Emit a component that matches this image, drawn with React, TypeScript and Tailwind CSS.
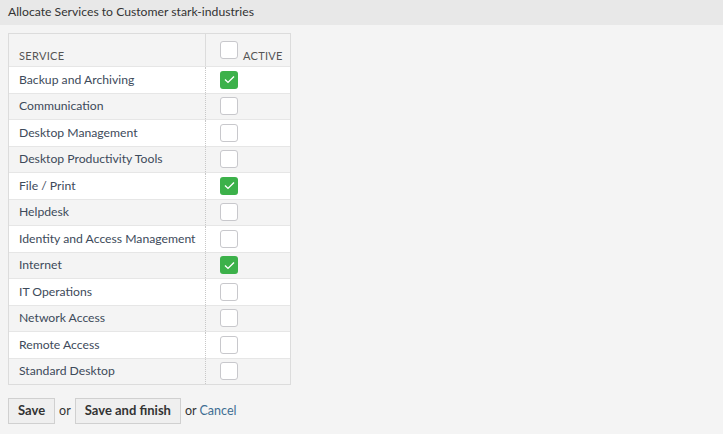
import React, { useState } from "react";

const services = [
    { name: "Backup and Archiving", active: true },
    { name: "Communication", active: false },
    { name: "Desktop Management", active: false },
    { name: "Desktop Productivity Tools", active: false },
    { name: "File / Print", active: true },
    { name: "Helpdesk", active: false },
    { name: "Identity and Access Management", active: false },
    { name: "Internet", active: true },
    { name: "IT Operations", active: false },
    { name: "Network Access", active: false },
    { name: "Remote Access", active: false },
    { name: "Standard Desktop", active: false },
];

function Box({ checked, onClick, className = "" }: { checked: boolean; onClick?: () => void; className?: string }) {
    return (
        <button
            type="button"
            onClick={onClick}
            className={
                (checked
                    ? "flex h-[18px] w-[18px] items-center justify-center rounded-[3px] bg-[#3cb14a] "
                    : "h-[18px] w-[18px] rounded-[3px] border border-[#c8c8cc] bg-white ") + className
            }
        >
            {checked && (
                <svg width="11" height="9" viewBox="0 0 11 9" fill="none">
                    <path d="M1 4.6 L4 7.4 L10 1.4" stroke="white" strokeWidth="1.4" />
                </svg>
            )}
        </button>
    );
}

export default function App() {
    const [rows, setRows] = useState(services);

    const toggle = (i: number) => {
        setRows(rows.map((r, idx) => (idx === i ? { ...r, active: !r.active } : r)));
    };

    return (
        <div className="min-h-[434px] bg-[#f4f4f4] text-[12px] text-[#333]" style={{ fontFamily: "Lato, sans-serif" }}>
            {/* Header */}
            <div className="flex h-[25px] items-center bg-[#e8e8e8] px-2">
                <h1 className="text-[12.2px] font-normal text-[#333]">Allocate Services to Customer stark-industries</h1>
            </div>

            <div className="px-2 pt-2">
                {/* Table */}
                <div className="w-[283px] border border-[#dcdcdc]">
                    <div className="flex h-[32px] bg-[#f4f4f4]">
                        <div className="flex w-[196px] items-end pb-[4px] pl-[10px] text-[11px] uppercase leading-[12px] tracking-[0.3px] text-[#555]">Service</div>
                        <div className="flex flex-1 items-end gap-[5px] border-l border-[#dcdcdc] pb-[4px] pl-[14px]">
                            <Box checked={false} className="mb-[3px]" />
                            <span className="text-[11px] uppercase leading-[12px] tracking-[0.3px] text-[#555]">Active</span>
                        </div>
                    </div>
                    {rows.map((s, i) => (
                        <div key={s.name} className={`flex h-[26.5px] border-t border-[#e6e6e6] ${i % 2 === 0 ? "bg-white" : "bg-[#f4f4f4]"}`}>
                            <div className="flex w-[196px] items-center whitespace-nowrap pl-[10px] text-[12.2px] text-[#3d4a5a]">{s.name}</div>
                            <div className="flex flex-1 items-center border-l border-dotted border-[#c8c8c8] pl-[14px]">
                                <Box checked={s.active} onClick={() => toggle(i)} />
                            </div>
                        </div>
                    ))}
                </div>

                {/* Actions */}
                <div className="mt-[13px] flex items-center gap-[4px] text-[12.5px] text-[#333]">
                    <button className="h-[26px] border border-[#d0d0d0] bg-[#efefef] px-[9px] text-[13px] font-bold text-[#333]">Save</button>
                    <span>or</span>
                    <button className="h-[26px] border border-[#d0d0d0] bg-[#efefef] px-[9px] text-[13px] font-bold text-[#333]">Save and finish</button>
                    <span>
                        or <a href="#" className="text-[#3f6e93]">Cancel</a>
                    </span>
                </div>
            </div>
        </div>
    );
}
